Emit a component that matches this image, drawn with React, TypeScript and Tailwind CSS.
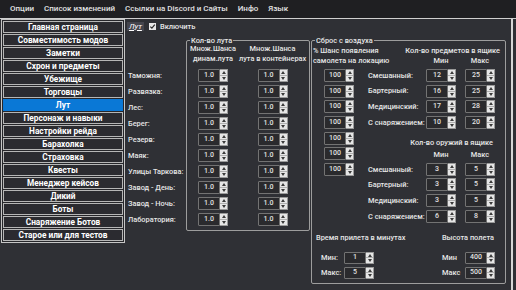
import React from "react";

const FONT = { fontFamily: 'Roboto, "Noto Sans", "DejaVu Sans", sans-serif' };

function Spin({ v, h = 13 }: { v: string; h?: number }) {
  return (
    <div className="flex w-[30px]" style={{ height: h }}>
      <div className="flex flex-1 items-center justify-center rounded-l-[1px] border border-[#737373] bg-[#2a2a2d] text-[7px] leading-none text-[#e2e2e2]">
        {v}
      </div>
      <div className="flex w-[8px] flex-col border border-l-0 border-[#9a9a9a] bg-[#e6e6e6]">
        <div className="flex flex-1 items-center justify-center border-b border-[#b0b0b0]">
          <svg width="4" height="3" viewBox="0 0 4 3">
            <path d="M2 0L4 3H0z" fill="#3a3a3a" />
          </svg>
        </div>
        <div className="flex flex-1 items-center justify-center">
          <svg width="4" height="3" viewBox="0 0 4 3">
            <path d="M0 0H4L2 3z" fill="#3a3a3a" />
          </svg>
        </div>
      </div>
    </div>
  );
}

const menu = ["Опции", "Список изменений", "Ссылки на Discord и Сайты", "Инфо", "Язык"];

const side = [
  "Главная страница",
  "Совместимость модов",
  "Заметки",
  "Схрон и предметы",
  "Убежище",
  "Торговцы",
  "Лут",
  "Персонаж и навыки",
  "Настройки рейда",
  "Барахолка",
  "Страховка",
  "Квесты",
  "Менеджер кейсов",
  "Дикий",
  "Боты",
  "Снаряжение Ботов",
  "Старое или для тестов",
];

const locs = [
  "Таможня:",
  "Развязка:",
  "Лес:",
  "Берег:",
  "Резерв:",
  "Маяк:",
  "Улицы Таркова:",
  "Завод - День:",
  "Завод - Ночь:",
  "Лаборатория:",
];

const items: [string, string, string][] = [
  ["Смешанный:", "12", "25"],
  ["Бартерный:", "16", "25"],
  ["Медицинский:", "17", "28"],
  ["С снаряжением:", "10", "20"],
];

const weapons: [string, string, string][] = [
  ["Смешанный:", "3", "5"],
  ["Бартерный:", "3", "5"],
  ["Медицинский:", "3", "5"],
  ["С снаряжением:", "6", "8"],
];

function TripleRow({ r }: { r: [string, string, string] }) {
  return (
    <div className="flex h-[15.7px] items-center">
      <div className="w-[58px] whitespace-nowrap">{r[0]}</div>
      <Spin v={r[1]} />
      <div className="w-[9px]" />
      <Spin v={r[2]} />
    </div>
  );
}

export default function App() {
  return (
    <div
      className="flex h-[290px] w-[516px] flex-col overflow-hidden bg-[#2f3035] text-[#e6e6e6]"
      style={FONT}
    >
      {/* menu bar */}
      <div className="flex h-[19px] shrink-0 items-center gap-[10px] border-b border-[#cfcfcf] bg-[#1f1f22] pl-[10px] text-[8px] font-medium text-[#e2e2e2]">
        {menu.map((m) => (
          <span key={m} className="whitespace-nowrap">
            {m}
          </span>
        ))}
      </div>

      <div className="flex flex-1 pr-[3px]">
        {/* sidebar */}
        <div className="w-[125px] shrink-0 pl-[1px]">
          <div className="flex flex-col gap-[1px] border border-[#c6c6c6] bg-[#26262a] p-[1px]">
            {side.map((s) => {
              const sel = s === "Лут";
              return (
                <div
                  key={s}
                  className={
                    "flex h-[12px] items-center justify-center border text-[8.3px] font-bold leading-none text-white " +
                    (sel ? "border-[#0a78d6] bg-[#0a78d6]" : "border-[#b6b6b6] bg-[#2b2b30]")
                  }
                >
                  {s}
                </div>
              );
            })}
          </div>
        </div>

        {/* main */}
        <div className="flex flex-1 flex-col border-r-2 border-[#d6d6d6]">
          {/* tab header */}
          <div className="flex h-[12px] shrink-0 items-end pl-[2px]">
            <div className="flex h-[9px] items-center bg-[#45454d] px-[2px] text-[8px] italic leading-none text-white underline">
              Лут
            </div>
            <div className="mb-[1px] ml-[5px] flex items-center self-end">
              <svg width="7" height="7" viewBox="0 0 7 7">
                <rect x="0" y="0" width="7" height="7" fill="#e8e8e8" />
                <path d="M1.3 3.6L2.9 5.2L5.8 1.6" stroke="#2a2a2a" strokeWidth="1.2" fill="none" />
              </svg>
              <span className="ml-[4px] text-[7.5px] font-medium leading-none">Включить</span>
            </div>
          </div>

          {/* content */}
          <div className="flex items-start pl-[2px] pt-[9px] text-[7.4px] font-medium leading-none">
            {/* location labels */}
            <div className="w-[59px] pl-[1px] pt-[27.5px]">
              {locs.map((l) => (
                <div key={l} className="flex h-[16px] items-center whitespace-nowrap">
                  {l}
                </div>
              ))}
            </div>

            {/* group 1 */}
            <div className="relative h-[191px] w-[124px] rounded-[2px] border border-[#9d9d9d]">
              <div className="absolute -top-[5px] left-[3px] bg-[#2f3035] px-[1px] leading-[9px]">
                Кол-во лута
              </div>
              <div className="pt-[3px]">
                <div className="grid grid-cols-[52px_67px] leading-[9.5px]">
                  <div className="text-center whitespace-nowrap">Множ.Шанса</div>
                  <div className="text-center whitespace-nowrap">Множ.Шанса</div>
                  <div className="text-center whitespace-nowrap">динам.лута</div>
                  <div className="text-center whitespace-nowrap">лута в контейнерах</div>
                </div>
                <div className="mt-[4.5px]">
                  {locs.map((l) => (
                    <div key={l} className="grid h-[16px] grid-cols-[52px_67px] items-center">
                      <div className="flex justify-center">
                        <Spin v="1.0" />
                      </div>
                      <div className="flex justify-center">
                        <Spin v="1.0" />
                      </div>
                    </div>
                  ))}
                </div>
              </div>
            </div>

            {/* group 2 */}
            <div className="relative ml-[1px] h-[244px] w-[195px] rounded-[2px] border border-[#9d9d9d]">
              <div className="absolute -top-[5px] left-[3px] bg-[#2f3035] px-[1px] leading-[9px]">
                Сброс с воздуха
              </div>
              <div className="pt-[4.5px]">
                <div className="flex h-[10px] items-center justify-between pl-[1px] pr-[5px]">
                  <span className="whitespace-nowrap">% Шанс появления</span>
                  <span className="whitespace-nowrap">Кол-во предметов в ящике</span>
                </div>
                <div className="flex h-[10px] items-center pl-[1px]">
                  <div className="w-[55px] whitespace-nowrap">самолета на локацию</div>
                  <div className="w-[58px]" />
                  <div className="w-[30px] text-center">Мин</div>
                  <div className="w-[9px]" />
                  <div className="w-[30px] text-center">Макс</div>
                </div>

                <div className="mt-[2px] flex">
                  <div className="w-[56px] pl-[12px]">
                    {Array.from({ length: 7 }).map((_, i) => (
                      <div key={i} className="flex h-[15.7px] items-center">
                        <Spin v="100" />
                      </div>
                    ))}
                  </div>
                  <div>
                    {items.map((r) => (
                      <TripleRow key={r[0]} r={r} />
                    ))}
                    <div className="mt-[7.7px] flex h-[10px] items-center justify-end pr-[2px]">
                      <span className="whitespace-nowrap">Кол-во оружий в ящике</span>
                    </div>
                    <div className="mt-[2px] flex h-[10px] items-center">
                      <div className="w-[58px]" />
                      <div className="w-[30px] text-center">Мин</div>
                      <div className="w-[9px]" />
                      <div className="w-[30px] text-center">Макс</div>
                    </div>
                    <div className="mt-[1.5px]">
                      {weapons.map((r) => (
                        <TripleRow key={r[0] + "w"} r={r} />
                      ))}
                    </div>
                  </div>
                </div>

                <div className="mt-[8.7px] flex h-[10px] items-center justify-between pl-[4px] pr-[11px]">
                  <span className="whitespace-nowrap">Время прилета в минутах</span>
                  <span className="whitespace-nowrap">Высота полета</span>
                </div>

                <div className="mt-[7.5px] flex justify-between pl-[9px] pr-[10px]">
                  <div>
                    <div className="flex h-[15px] items-center">
                      <div className="w-[23px]">Мин:</div>
                      <Spin v="1" h={12} />
                    </div>
                    <div className="flex h-[15px] items-center">
                      <div className="w-[23px]">Макс:</div>
                      <Spin v="5" h={12} />
                    </div>
                  </div>
                  <div>
                    <div className="flex h-[15px] items-center">
                      <div className="w-[25px] pl-[2px]">Мин</div>
                      <Spin v="400" h={12} />
                    </div>
                    <div className="flex h-[15px] items-center">
                      <div className="w-[25px] pl-[2px]">Макс</div>
                      <Spin v="500" h={12} />
                    </div>
                  </div>
                </div>
              </div>
            </div>
          </div>
        </div>
      </div>
    </div>
  );
}
